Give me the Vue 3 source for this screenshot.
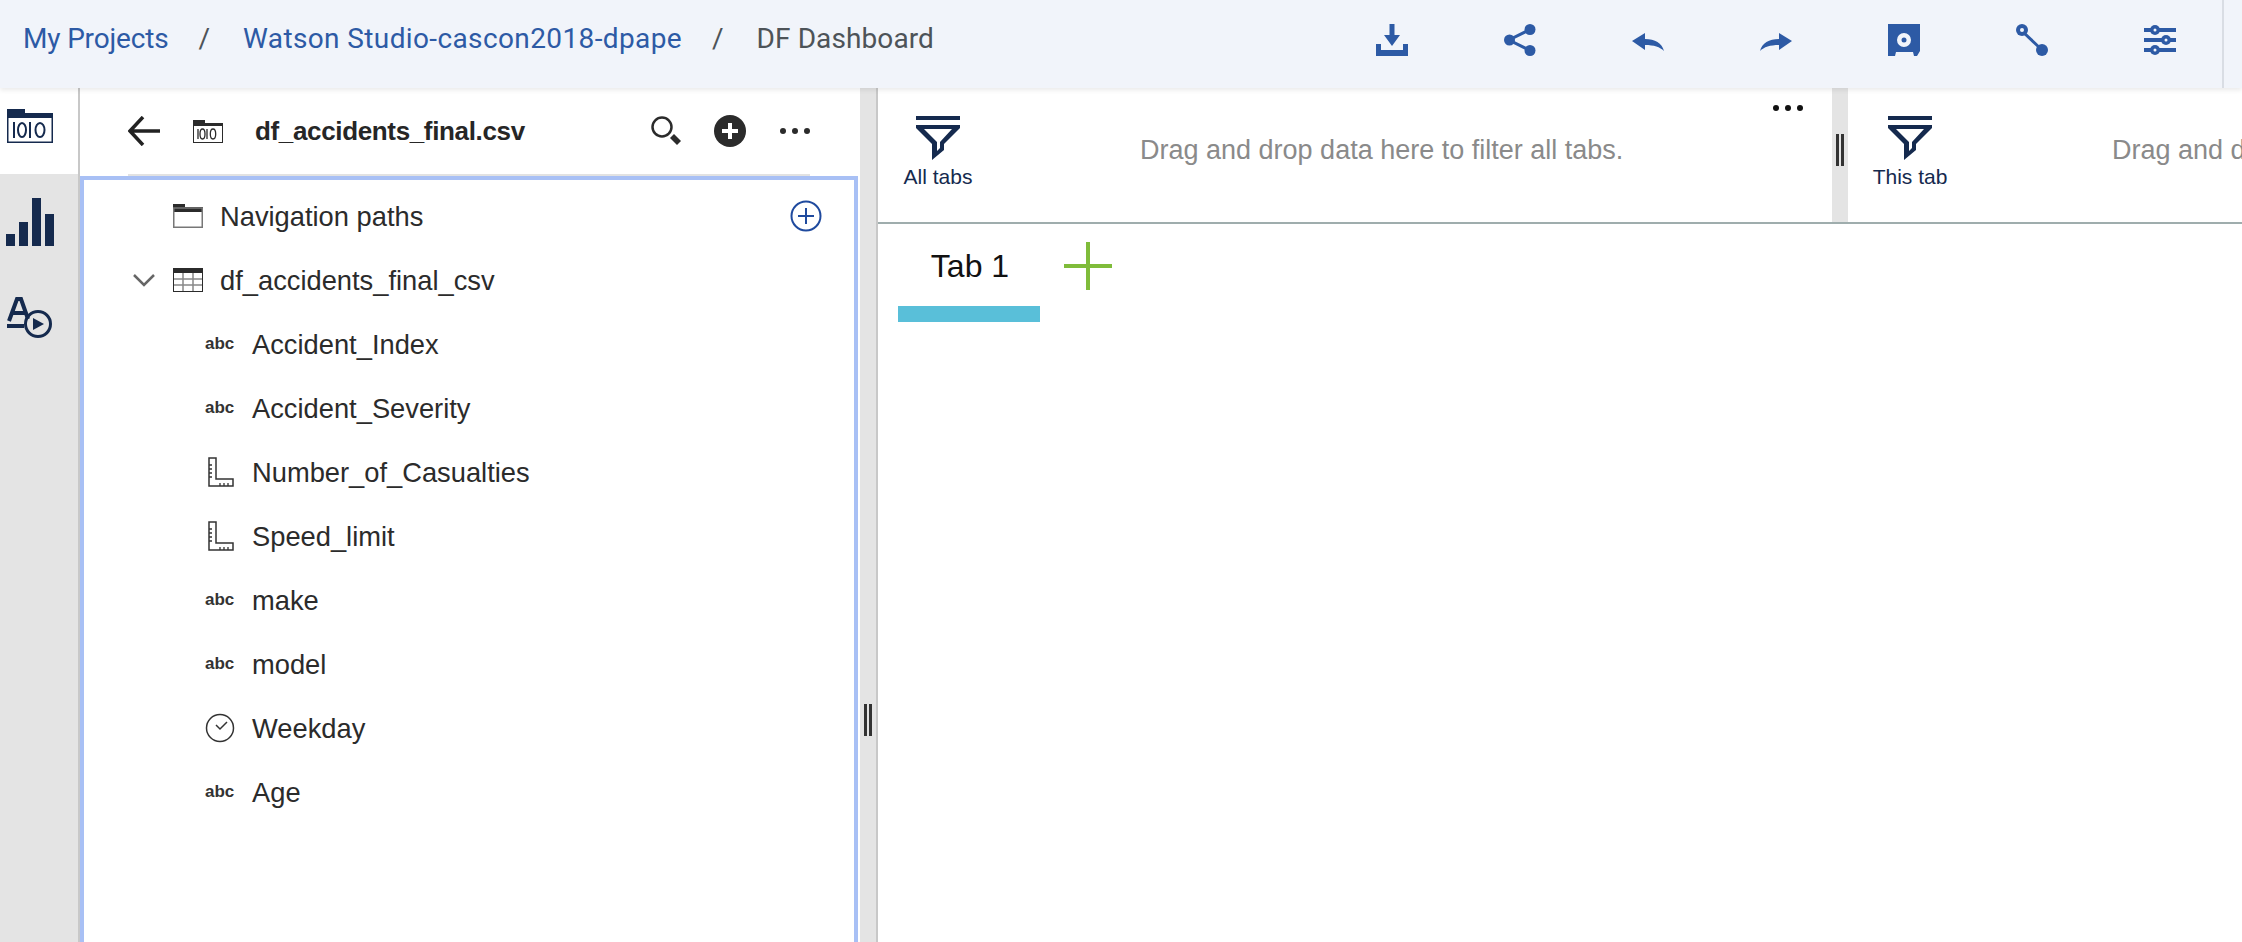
<template>
  <div class="app">
    <header class="topbar">
      <nav class="crumbs">
        <a class="crumb first">My Projects</a>
        <span class="sep">/</span>
        <a class="crumb project">Watson Studio-cascon2018-dpape</a>
        <span class="sep">/</span>
        <span class="crumb current">DF Dashboard</span>
      </nav>
      <div class="tools">
        <svg class="tool" viewBox="0 0 32 32"><path d="M13.5 0h5v11h5.500l-8 11-8-11h5.500zM0 20h5v6h22v-6h5v12H0z" /></svg>
        <svg class="tool" viewBox="0 0 32 32"><path d="M26 5.5 5 16l21 10.500" fill="none" stroke="#2d5aa5" stroke-width="3" /><circle cx="26" cy="5.500" r="5.500" /><circle cx="26" cy="26.500" r="5.500" /><circle cx="5.500" cy="16" r="5.500" /></svg>
        <svg class="tool" viewBox="0 0 32 32"><path d="M0 17 13 9v6c10 0 17 4 19 12-4-4-10-6-19-6v5z" /></svg>
        <svg class="tool" viewBox="0 0 32 32"><path d="M32 17 19 9v6C9 15 2 19 0 27c4-4 10-6 19-6v5z" /></svg>
        <svg class="tool" viewBox="0 0 32 32"><path fill-rule="evenodd" d="M0 0h32v27l-3 5h-3l-1-4H8l-1 4H0zM16 9a7 7 0 1 0 0 14 7 7 0 0 0 0-14z" /><circle cx="16" cy="16" r="2.500" /></svg>
        <svg class="tool" viewBox="0 0 32 32"><path d="M6 7 26 26" stroke="#2d5aa5" stroke-width="3" /><circle cx="6" cy="6" r="6" /><circle cx="6" cy="6" r="2" fill="#f1f4fa" /><circle cx="26" cy="26" r="6" /></svg>
        <svg class="tool" viewBox="0 0 32 32"><path d="M0 4h32v4H0zM0 14h32v4H0zM0 24h32v4H0z" /><circle cx="11" cy="6" r="5" /><circle cx="22" cy="16" r="5" /><circle cx="11" cy="26" r="5" /><circle cx="11" cy="6" r="1.500" fill="#f1f4fa" /><circle cx="22" cy="16" r="1.500" fill="#f1f4fa" /><circle cx="11" cy="26" r="1.500" fill="#f1f4fa" /></svg>
      </div>
      <div class="topbar-end"></div>
    </header>

    <div class="body">
      <aside class="rail">
        <div class="rail-tile">
          <svg class="rail-data" viewBox="0 0 46 34">
            <path d="M0 0h18v4h28v30H0z" fill="#152a4e" />
            <rect x="1.500" y="9" width="43" height="23.500" fill="#fff" />
            <path d="M7 13v16M23 13v16" stroke="#152a4e" stroke-width="2" />
            <ellipse cx="15" cy="21" rx="4" ry="7" fill="none" stroke="#152a4e" stroke-width="2" />
            <ellipse cx="33" cy="21" rx="4.500" ry="7" fill="none" stroke="#152a4e" stroke-width="2" />
          </svg>
        </div>
        <svg class="rail-bars" viewBox="0 0 48 48">
          <path d="M0 36h9v12H0zM13 24h9v24h-9zM26 0h9v48h-9zM39 16h9v32h-9z" fill="#152a4e" />
        </svg>
        <svg class="rail-text" viewBox="0 0 46 41">
          <path d="M2 24 10 2h4l7 20M5 16h13M0 29h17" fill="none" stroke="#152a4e" stroke-width="4" />
          <circle cx="31" cy="27" r="12.500" fill="none" stroke="#152a4e" stroke-width="3" />
          <path d="M26 21l11 6-11 6z" fill="#152a4e" />
        </svg>
      </aside>

      <section class="panel">
        <div class="panel-head">
          <svg class="back" viewBox="0 0 32 30"><path d="M32 15H3M15 1 2 15l13 14" fill="none" stroke="#222" stroke-width="3.500" /></svg>
          <svg class="file" viewBox="0 0 30 23">
            <path d="M0 0h12v3h18v20H0z" fill="#2b2b2b" />
            <rect x="1" y="6" width="28" height="16" fill="#fff" />
            <path d="M5 9v10M14 9v10" stroke="#2b2b2b" stroke-width="1.300" />
            <ellipse cx="9.500" cy="14" rx="2.500" ry="5" fill="none" stroke="#2b2b2b" stroke-width="1.300" />
            <ellipse cx="20" cy="14" rx="2.700" ry="5" fill="none" stroke="#2b2b2b" stroke-width="1.300" />
          </svg>
          <span class="title">df_accidents_final.csv</span>
          <svg class="search" viewBox="0 0 30 30"><circle cx="11" cy="11" r="9.500" fill="none" stroke="#2b2b2b" stroke-width="2.500" /><path d="M19 22l4-4 7 7-4 4z" fill="#2b2b2b" /></svg>
          <svg class="plus-dark" viewBox="0 0 32 32"><circle cx="16" cy="16" r="16" fill="#2b2b2b" /><path d="M16 8v16M8 16h16" stroke="#fff" stroke-width="4" /></svg>
          <div class="dots"><i></i><i></i><i></i></div>
        </div>
        <div class="panel-rule"></div>
        <div class="tree">
          <div class="row">
            <span class="chev"></span>
            <svg class="ic30" viewBox="0 0 30 24"><path d="M0 0h12v3h18v5H0z" fill="#2b2b2b" /><rect x=".75" y="4" width="28.500" height="19.250" fill="none" stroke="#777" stroke-width="1.500" /></svg>
            <span class="label">Navigation paths</span>
            <svg class="add" viewBox="0 0 32 32"><circle cx="16" cy="16" r="14.500" fill="none" stroke="#1f4a9e" stroke-width="2" /><path d="M16 8v16M8 16h16" stroke="#1f4a9e" stroke-width="2" /></svg>
          </div>
          <div class="row">
            <svg class="chev" viewBox="0 0 22 13"><path d="M1 1l10 10L21 1" fill="none" stroke="#666" stroke-width="2.500" /></svg>
            <svg class="ic30" viewBox="0 0 30 24"><rect width="30" height="24" fill="#2b2b2b" /><rect x="1" y="5" width="28" height="18" fill="#fff" /><path d="M1 11h28M1 17h28M10 5v18M20 5v18" stroke="#888" stroke-width="1.500" /></svg>
            <span class="label">df_accidents_final_csv</span>
          </div>
          <div v-for="col in columns" :key="col.name" class="row child">
            <span v-if="col.type === 'text'" class="abc">abc</span>
            <svg v-else-if="col.type === 'num'" class="type-ic" viewBox="0 0 30 30">
              <path d="M4 1h7v21h17v7H4z" fill="none" stroke="#333" stroke-width="1.500" />
              <path d="M4 8h3M4 12h3M4 16h3M4 20h3M15 29v-3M19 29v-3M23 29v-3" stroke="#333" stroke-width="1.300" />
            </svg>
            <svg v-else class="type-ic" viewBox="0 0 30 30">
              <circle cx="15" cy="15" r="13.500" fill="none" stroke="#333" stroke-width="1.500" />
              <path d="M11 12l4 4 7-7" fill="none" stroke="#333" stroke-width="1.500" />
            </svg>
            <span class="label">{{ col.name }}</span>
          </div>
        </div>
      </section>

      <div class="splitter"><span class="grip"></span></div>

      <main class="main">
        <div class="filters">
          <div class="filter all">
            <div class="filter-id">
              <svg class="funnel" viewBox="0 0 44 44"><path d="M0 0h44v4H0z" fill="#152a4e" /><path fill-rule="evenodd" d="M0 9h44v3L28 28v6L16 44V28L0 12zM8 13l13 13v9l3-3v-6l12-13z" fill="#152a4e" /></svg>
              <span>All tabs</span>
            </div>
            <span class="hint">Drag and drop data here to filter all tabs.</span>
            <div class="dots small"><i></i><i></i><i></i></div>
          </div>
          <div class="filter-split"><span class="grip"></span></div>
          <div class="filter this">
            <div class="filter-id">
              <svg class="funnel" viewBox="0 0 44 44"><path d="M0 0h44v4H0z" fill="#152a4e" /><path fill-rule="evenodd" d="M0 9h44v3L28 28v6L16 44V28L0 12zM8 13l13 13v9l3-3v-6l12-13z" fill="#152a4e" /></svg>
              <span>This tab</span>
            </div>
            <span class="hint">Drag and drop data here to filter this tab.</span>
          </div>
        </div>
        <div class="tabs">
          <div class="tab">Tab 1</div>
          <svg class="tab-add" viewBox="0 0 48 48"><path d="M24 0v48M0 24h48" stroke="#7fbc3a" stroke-width="4" /></svg>
        </div>
      </main>
    </div>
  </div>
</template>

<script setup>
const columns = [
  { name: 'Accident_Index', type: 'text' },
  { name: 'Accident_Severity', type: 'text' },
  { name: 'Number_of_Casualties', type: 'num' },
  { name: 'Speed_limit', type: 'num' },
  { name: 'make', type: 'text' },
  { name: 'model', type: 'text' },
  { name: 'Weekday', type: 'time' },
  { name: 'Age', type: 'text' }
]
</script>

<style>
html, body {
  margin: 0;
  background: #fff;
}
</style>

<style scoped>
.app {
  height: 942px;
  overflow: hidden;
  display: flex;
  flex-direction: column;
  font-family: "Liberation Sans", Arial, sans-serif;
  color: #262626;
}

.topbar {
  flex: none;
  height: 88px;
  display: flex;
  align-items: center;
  background: #f1f4fa;
  box-shadow: 0 2px 5px rgba(0, 0, 0, 0.09);
  position: relative;
  z-index: 2;
}

.crumbs {
  display: flex;
  align-items: center;
  padding-left: 23px;
  margin-bottom: 12px;
  font-family: Roboto, sans-serif;
  font-size: 28px;
  flex: none;
  width: 1376px;
  box-sizing: border-box;
}

.crumb {
  color: #2d5aa5;
  letter-spacing: 0.1px;
}

.crumb.first {
  letter-spacing: -0.17px;
}

.crumb.project {
  letter-spacing: 0.38px;
}

.crumb.current {
  color: #4d5358;
}

.sep {
  color: #4d5358;
  margin: 0 33px 0 30px;
}

.tools {
  display: flex;
  gap: 96px;
  margin-bottom: 8px;
}

.tool {
  width: 32px;
  height: 32px;
  fill: #2d5aa5;
}

.topbar-end {
  margin-left: 46px;
  width: 2px;
  align-self: stretch;
  background: #d9dde4;
}

.body {
  flex: 1;
  display: flex;
  min-height: 0;
}

.rail {
  flex: none;
  width: 78px;
  border-right: 2px solid #c8c8c8;
  background: #e4e4e4;
  display: flex;
  flex-direction: column;
  align-items: flex-start;
}

.rail-tile {
  width: 78px;
  height: 86px;
  background: #fff;
}

.rail-data {
  display: block;
  width: 46px;
  height: 34px;
  margin: 21px 0 0 7px;
}

.rail-bars {
  width: 48px;
  height: 48px;
  margin: 24px 0 0 6px;
}

.rail-text {
  width: 46px;
  height: 41px;
  margin: 51px 0 0 7px;
}

.panel {
  flex: none;
  width: 780px;
  display: flex;
  flex-direction: column;
}

.panel-head {
  height: 86px;
  flex: none;
  display: flex;
  align-items: center;
  padding-left: 48px;
}

.back {
  width: 32px;
  height: 30px;
}

.file {
  width: 30px;
  height: 23px;
  margin-left: 33px;
}

.title {
  margin-left: 32px;
  font-size: 26px;
  font-weight: 700;
  letter-spacing: -0.35px;
  width: 396px;
  white-space: nowrap;
}

.search {
  width: 30px;
  height: 30px;
}

.plus-dark {
  width: 32px;
  height: 32px;
  margin-left: 33px;
}

.dots {
  display: flex;
  gap: 6px;
  margin-left: 34px;
}

.dots i {
  width: 6px;
  height: 6px;
  border-radius: 50%;
  background: #2b2b2b;
}

.panel-rule {
  flex: none;
  height: 2px;
  margin: 0 50px 0 48px;
  background: #e2e2e2;
}

.tree {
  flex: 1;
  width: 778px;
  box-sizing: border-box;
  border: 4px solid #a8c0f5;
  border-bottom: none;
  padding-top: 4px;
}

.row {
  height: 64px;
  display: flex;
  align-items: center;
  padding: 0 32px 0 49px;
}

.row.child {
  padding-left: 121px;
}

.chev {
  flex: none;
  width: 22px;
  height: 13px;
  margin-right: 18px;
}

.ic30 {
  flex: none;
  width: 30px;
  height: 24px;
  margin-right: 17px;
}

.label {
  padding-top: 1px;
  font-size: 27.3px;
  color: #2b2b2b;
  white-space: nowrap;
}

.add {
  width: 32px;
  height: 32px;
  margin-left: auto;
}

.abc {
  flex: none;
  width: 30px;
  margin-right: 17px;
  font-size: 17px;
  font-weight: 700;
  color: #333;
  white-space: nowrap;
}

.type-ic {
  flex: none;
  width: 30px;
  height: 30px;
  margin-right: 17px;
}

.splitter {
  flex: none;
  width: 16px;
  border-right: 2px solid #c8c8c8;
  background: #e4e4e4;
  display: flex;
  align-items: flex-start;
  justify-content: center;
}

.splitter .grip {
  margin-top: 616px;
}

.grip {
  display: block;
  width: 2px;
  height: 32px;
  border-left: 3px solid #333;
  border-right: 3px solid #333;
}

.main {
  flex: 1;
  min-width: 0;
  overflow: hidden;
}

.filters {
  height: 134px;
  display: flex;
  border-bottom: 2px solid #9fadad;
}

.filter {
  display: flex;
  position: relative;
  height: 100%;
}

.filter.all {
  flex: none;
  width: 954px;
}

.filter.this {
  flex: none;
  width: 800px;
}

.filter-id {
  flex: none;
  display: flex;
  flex-direction: column;
  align-items: center;
  width: 70px;
  margin-left: 25px;
  padding-top: 28px;
  font-size: 21px;
  color: #152a4e;
  white-space: nowrap;
}

.funnel {
  width: 44px;
  height: 44px;
  margin-bottom: 5px;
}

.filter.this .filter-id {
  margin-left: 24px;
  width: 76px;
}

.hint {
  font-size: 27px;
  color: #8a8a8a;
  white-space: nowrap;
  margin: 47px 0 0 167px;
}

.filter.this .hint {
  margin-left: 164px;
}

.dots.small {
  position: absolute;
  top: 17px;
  right: 29px;
  margin: 0;
}

.dots.small i {
  background: #111;
}

.filter-split {
  flex: none;
  width: 16px;
  background: #e4e4e4;
  display: flex;
  justify-content: center;
  padding-top: 46px;
  box-sizing: border-box;
}

.tabs {
  display: flex;
  align-items: flex-start;
  padding: 18px 0 0 20px;
}

.tab {
  width: 142px;
  height: 48px;
  padding-bottom: 16px;
  border-bottom: 16px solid #59bfd9;
  line-height: 48px;
  text-align: center;
  text-indent: 2px;
  font-size: 32px;
  color: #111;
}

.tab-add {
  width: 48px;
  height: 48px;
  margin-left: 24px;
}
</style>
